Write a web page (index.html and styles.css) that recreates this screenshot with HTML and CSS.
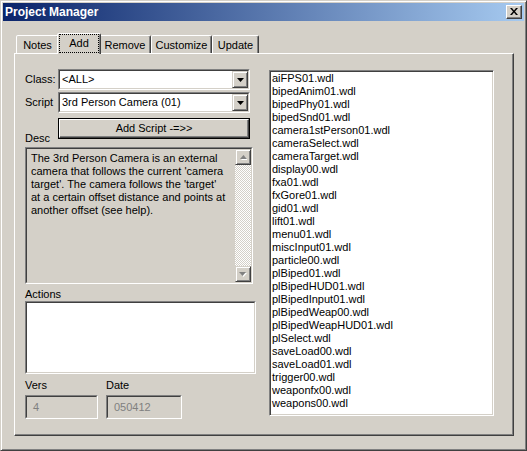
FILE: index.html
```html
<!DOCTYPE html>
<html>
<head>
<meta charset="utf-8">
<title>Project Manager</title>
<link rel="stylesheet" href="styles.css">
</head>
<body>
<div class="window">
  <div class="titlebar">
    <span class="title">Project Manager</span>
    <span class="close-btn"><svg width="8" height="7" viewBox="0 0 8 7"><path d="M0 0h2l2 2.5 2-2.5h2l-3 3.5 3 3.5h-2l-2-2.5-2 2.5h-2l3-3.5z" fill="#000"/></svg></span>
  </div>
  <div class="client">
    <div class="tabs">
      <div class="tab tab-notes">Notes</div>
      <div class="tab tab-add selected"><span class="focus">Add</span></div>
      <div class="tab tab-remove">Remove</div>
      <div class="tab tab-custom">Customize</div>
      <div class="tab tab-update">Update</div>
    </div>
    <div class="panel">
      <div class="left">
        <div class="row">
          <span class="lbl">Class:</span>
          <div class="combo"><div class="sunken-in combo-in">
            <span class="combo-text">&lt;ALL&gt;</span>
            <span class="drop"><svg width="7" height="4" viewBox="0 0 7 4"><path d="M0 0h7l-3.5 4z" fill="#000"/></svg></span>
          </div></div>
        </div>
        <div class="row row-script">
          <span class="lbl">Script</span>
          <div class="combo"><div class="sunken-in combo-in">
            <span class="combo-text">3rd Person Camera (01)</span>
            <span class="drop"><svg width="7" height="4" viewBox="0 0 7 4"><path d="M0 0h7l-3.5 4z" fill="#000"/></svg></span>
          </div></div>
        </div>
        <div class="row row-btn">
          <span class="lbl lbl-desc">Desc</span>
          <div class="btn"><div class="btn-in">Add Script -=&gt;&gt;</div></div>
        </div>
        <div class="desc"><div class="sunken-in desc-in">
          <div class="desc-text">The 3rd Person Camera is an external<br>camera that follows the current 'camera<br>target'. The camera follows the 'target'<br>at a certain offset distance and points at<br>another offset (see help).</div>
          <div class="vscroll">
            <span class="sbtn"><svg width="7" height="5" viewBox="0 0 7 5"><path d="M1 5h7l-3.5-4z" fill="#fff"/><path d="M0 4h7l-3.5-4z" fill="#808080"/></svg></span>
            <span class="track"></span>
            <span class="sbtn"><svg width="8" height="5" viewBox="0 0 8 5"><path d="M1 1h7l-3.5 4z" fill="#fff"/><path d="M0 0h7l-3.5 4z" fill="#808080"/></svg></span>
          </div>
        </div></div>
        <div class="lbl-block lbl-actions">Actions</div>
        <div class="actions"><div class="sunken-in actions-in"></div></div>
        <div class="meta">
          <div class="field field-vers">
            <div class="lbl-block">Vers</div>
            <div class="box"><div class="sunken-in box-in">4</div></div>
          </div>
          <div class="field field-date">
            <div class="lbl-block">Date</div>
            <div class="box"><div class="sunken-in box-in">050412</div></div>
          </div>
        </div>
      </div>
      <div class="listbox">
        <div class="item">aiFPS01.wdl</div>
        <div class="item">bipedAnim01.wdl</div>
        <div class="item">bipedPhy01.wdl</div>
        <div class="item">bipedSnd01.wdl</div>
        <div class="item">camera1stPerson01.wdl</div>
        <div class="item">cameraSelect.wdl</div>
        <div class="item">cameraTarget.wdl</div>
        <div class="item">display00.wdl</div>
        <div class="item">fxa01.wdl</div>
        <div class="item">fxGore01.wdl</div>
        <div class="item">gid01.wdl</div>
        <div class="item">lift01.wdl</div>
        <div class="item">menu01.wdl</div>
        <div class="item">miscInput01.wdl</div>
        <div class="item">particle00.wdl</div>
        <div class="item">plBiped01.wdl</div>
        <div class="item">plBipedHUD01.wdl</div>
        <div class="item">plBipedInput01.wdl</div>
        <div class="item">plBipedWeap00.wdl</div>
        <div class="item">plBipedWeapHUD01.wdl</div>
        <div class="item">plSelect.wdl</div>
        <div class="item">saveLoad00.wdl</div>
        <div class="item">saveLoad01.wdl</div>
        <div class="item">trigger00.wdl</div>
        <div class="item">weaponfx00.wdl</div>
        <div class="item">weapons00.wdl</div>
      </div>
    </div>
  </div>
</div>
</body>
</html>
```
FILE: styles.css
```css
* { box-sizing: border-box; }
html, body { margin: 0; padding: 0; }
body {
  width: 527px;
  height: 451px;
  overflow: hidden;
  background: #d4d0c8;
  color: #000;
  font-family: "Liberation Sans", Arial, sans-serif;
  font-size: 11px;
  line-height: 13px;
}

.window {
  width: 527px;
  height: 451px;
  background: #d4d0c8;
  border: 1px solid;
  border-color: #d4d0c8 #404040 #404040 #d4d0c8;
  box-shadow: inset 1px 1px #fff, inset -1px -1px #808080;
  padding: 2px;
  display: flex;
  flex-direction: column;
}

.titlebar {
  height: 18px;
  flex: none;
  background: linear-gradient(to right, #0a246a, #a6caf0);
  display: flex;
  align-items: center;
  padding: 0 2px 0 2px;
}
.title {
  flex: 1;
  color: #fff;
  font-weight: bold;
  font-size: 12px;
  line-height: 18px;
}
.close-btn {
  width: 16px;
  height: 14px;
  background: #d4d0c8;
  border: 1px solid;
  border-color: #fff #404040 #404040 #fff;
  box-shadow: inset -1px -1px #808080;
  display: flex;
  align-items: center;
  justify-content: center;
  padding-bottom: 1px;
  padding-right: 1px;
}
.close-btn svg { display: block; }

.client {
  flex: 1;
  padding: 12px 10px 12px 11px;
  display: flex;
  flex-direction: column;
}

.tabs {
  height: 20px;
  flex: none;
  display: flex;
  align-items: flex-end;
  padding-left: 2px;
  position: relative;
  z-index: 1;
}
.tab {
  height: 18px;
  padding-top: 3px;
  border: 1px solid;
  border-bottom: none;
  border-color: #fff #404040 transparent #fff;
  box-shadow: inset -1px 0 #808080;
  border-radius: 2px 2px 0 0;
  background: #d4d0c8;
  text-align: center;
  white-space: nowrap;
}
.tab-notes { width: 43px; }
.tab-add { width: 40px; }
.tab-remove { width: 52px; }
.tab-custom { width: 61px; }
.tab-update { width: 47px; }
.tab.selected {
  position: relative;
  z-index: 2;
  width: 44px;
  height: 21px;
  margin: 0 -2px -1px -2px;
  padding-top: 0;
}
.focus {
  display: block;
  height: 19px;
  margin: 0 1px;
  border: 1px dotted #000;
  padding-top: 2px;
}

.panel {
  flex: 1;
  background: #d4d0c8;
  border: 1px solid;
  border-color: #fff #404040 #404040 #fff;
  box-shadow: inset -1px -1px #808080;
  display: flex;
  align-items: flex-start;
  gap: 13px;
  padding: 15px 19px 0 10px;
}

.left {
  width: 231px;
  flex: none;
  display: flex;
  flex-direction: column;
}
.row {
  display: flex;
  align-items: center;
  height: 21px;
}
.row-script { margin-top: 2px; }
.row-btn {
  margin-top: 5px;
  align-items: flex-end;
}
.lbl { width: 33px; flex: none; }
.lbl-desc { margin-bottom: -6px; }

.sunken-in {
  border: 1px solid;
  border-color: #404040 #d4d0c8 #d4d0c8 #404040;
  height: 100%;
}
.combo, .desc, .actions, .box {
  border: 1px solid;
  border-color: #808080 #fff #fff #808080;
}
.combo {
  width: 192px;
  height: 21px;
}
.combo-in {
  display: flex;
  align-items: stretch;
  background: #fff;
}
.combo-text {
  flex: 1;
  padding-left: 2px;
  line-height: 17px;
  white-space: nowrap;
}
.drop, .sbtn {
  width: 16px;
  flex: none;
  background: #d4d0c8;
  border: 1px solid;
  border-color: #d4d0c8 #404040 #404040 #d4d0c8;
  box-shadow: inset 1px 1px #fff, inset -1px -1px #808080;
  display: flex;
  align-items: center;
  justify-content: center;
}
.drop svg, .sbtn svg { display: block; }

.btn {
  width: 192px;
  height: 21px;
  border: 1px solid #000;
  background: #d4d0c8;
}
.btn-in {
  height: 100%;
  border: 1px solid;
  border-color: #fff #404040 #404040 #fff;
  box-shadow: inset -1px -1px #808080;
  text-align: center;
  line-height: 16px;
}

.desc {
  margin-top: 8px;
  width: 228px;
  height: 137px;
  background: #d4d0c8;
}
.desc-in {
  display: flex;
}
.desc-text {
  flex: 1;
  padding: 3px 0 0 4px;
  white-space: nowrap;
  overflow: hidden;
}
.vscroll {
  width: 16px;
  display: flex;
  flex-direction: column;
}
.sbtn { height: 16px; }
.track {
  flex: 1;
  background: repeating-conic-gradient(#fff 0 25%, #d4d0c8 0 50%) 0 0 / 2px 2px;
}

.lbl-block { line-height: 13px; }
.lbl-actions { margin-top: 4px; }
.actions {
  width: 231px;
  height: 73px;
}
.actions-in { background: #fff; }

.meta {
  display: flex;
  gap: 8px;
  margin-top: 5px;
}
.field .box { margin-top: 3px; height: 24px; }
.field-vers .box { width: 73px; }
.field-date .box { width: 76px; }
.box-in {
  color: #808080;
  padding-left: 6px;
  line-height: 20px;
}

.listbox {
  margin-top: 1px;
  width: 225px;
  height: 346px;
  flex: none;
  background: #fff;
  border: 1px solid;
  border-color: #808080 #fff #fff #808080;
  box-shadow: inset 1px 1px #404040, inset -1px -1px #d4d0c8;
  padding: 1px 0 0 2px;
}
.item {
  line-height: 13px;
  white-space: nowrap;
}
```
